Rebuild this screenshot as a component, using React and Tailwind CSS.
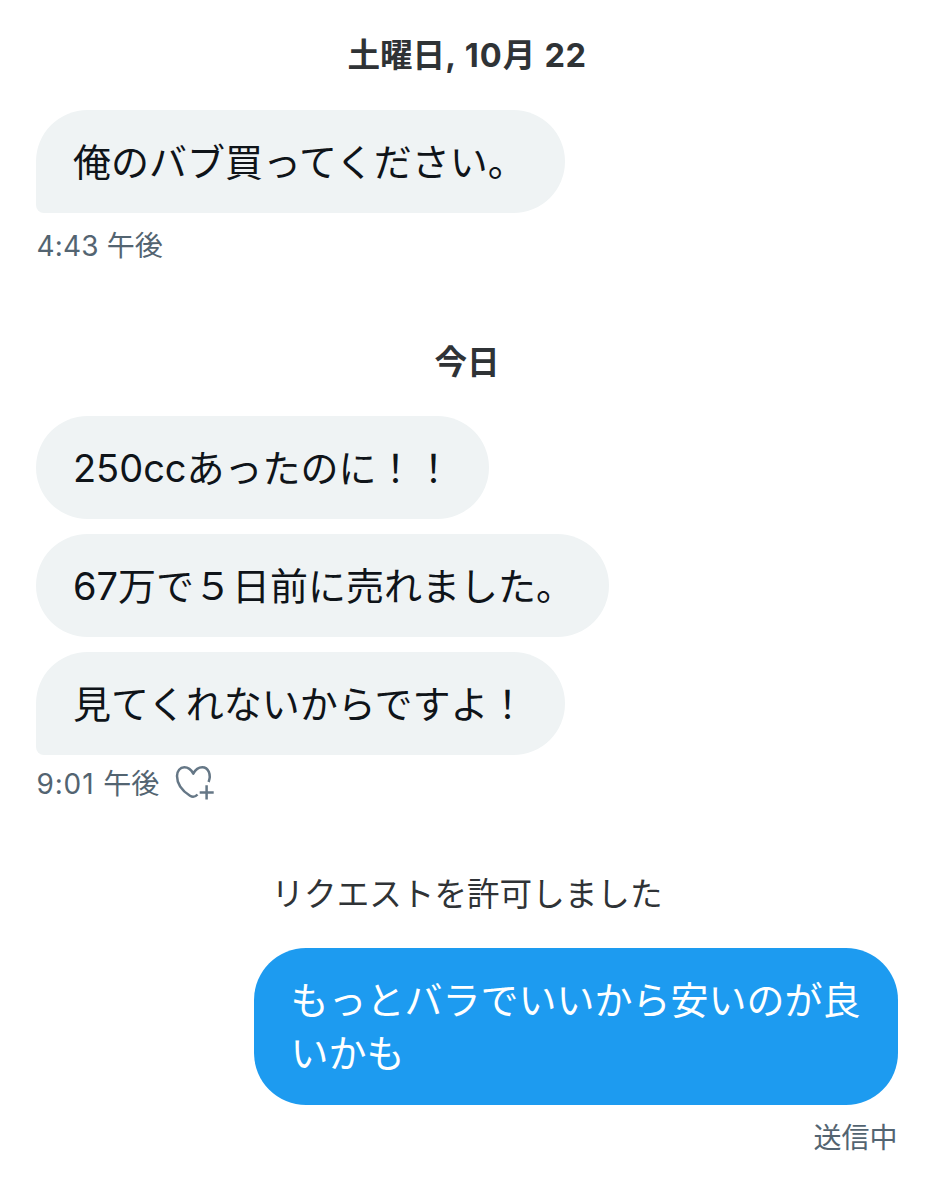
import React from 'react';

/* ─── DATA ──────────────────────────────────────────────────────────────── */
const todayMessages = [
  { text: '250ccあったのに！！', width: 'w-[453px]' },
  { text: '67万で５日前に売れました。', width: 'w-[573px]' },
  { text: '見てくれないからですよ！', width: 'w-[529px]', tail: true },
];

/* ─── ICONS ──────────────────────────────────────────────────────────────── */
function HeartPlusIcon() {
  return (
    <svg
      width="40"
      height="36"
      viewBox="0 0 40 36"
      fill="none"
      stroke="#657786"
      strokeWidth="2.5"
      className="-mt-[2px] ml-[16px] shrink-0"
    >
      <path
        strokeLinejoin="round"
        d="M33.6 17C36.500 9.500 33.300 2.300 27.300 2.300c-4.300 0-7.100 2.700-9 6.300-1.900-3.600-4.700-6.300-9-6.300C5.200 2.300 2 5.800 2 11c0 8.300 6.200 15.500 13 19.800 2.400 1.500 5.200 1.200 7.500-1.300"
      />
      <path d="M31.600 20.300v14.200M24.700 27.400h14" />
    </svg>
  );
}

/* ─── MESSAGE PARTS ──────────────────────────────────────────────────────── */
function DateHeading({ children }) {
  return (
    <h2 className="text-center text-[32.600px] leading-[48px] font-bold text-[#2f3336]">
      {children}
    </h2>
  );
}

function Received({ text, width, tail }) {
  return (
    <div
      className={`h-[103px] rounded-[52px] bg-[#eff3f4] pl-[36.500px] pt-[26px] text-[38px] leading-[53px] whitespace-nowrap text-[#0f1419] ${width} ${
        tail ? 'rounded-bl-[8px]' : ''
      }`}
    >
      {text}
    </div>
  );
}

/* ─── MAIN COMPONENT ─────────────────────────────────────────────────────── */
function App() {
  return (
    <main
      lang="ja"
      className="flex h-[1200px] w-[934px] flex-col overflow-hidden bg-white px-[36.400px] pt-[31px] font-['Inter','Noto_Sans_CJK_JP',sans-serif]"
    >
      <DateHeading>
        土曜日<span className="[word-spacing:2px]">, </span>
        <span className="tracking-[1px]">10</span>月<span className="[word-spacing:1px] tracking-[0.5px]"> 22</span>
      </DateHeading>

      <div className="mt-[31px]">
        <Received text="俺のバブ買ってください。" width="w-[529px]" tail />
      </div>
      <p className="mt-[13px] text-[28px] leading-[40px] text-[#536471]">
        <span className="tracking-[0.200px]">4:43 </span>午後
      </p>

      <div className="mt-[72px]">
        <DateHeading>今日</DateHeading>
      </div>

      <div className="mt-[30px] flex flex-col gap-[15px]">
        {todayMessages.map((m) => (
          <Received key={m.text} {...m} />
        ))}
      </div>
      <div className="mt-[9px] flex h-[39px] items-center text-[28px] leading-[40px] text-[#536471]">
        <p>
          <span className="tracking-[0.900px]">9:01 </span>午後
        </p>
        <HeartPlusIcon />
      </div>

      <p className="mt-[67px] text-center text-[32.600px] leading-[48px] text-[#2f3336]">
        リクエストを許可しました
      </p>

      <div className="mt-[30px] h-[157px] w-[643.500px] self-end rounded-[52px] bg-[#1d9bf0] px-[36.500px] pt-[26px] text-[38px] leading-[53px] text-white">
        もっとバラでいいから安いのが良いかも
      </div>
      <p className="mt-[13px] text-right text-[28px] leading-[40px] text-[#536471]">送信中</p>
    </main>
  );
}

export default App;
